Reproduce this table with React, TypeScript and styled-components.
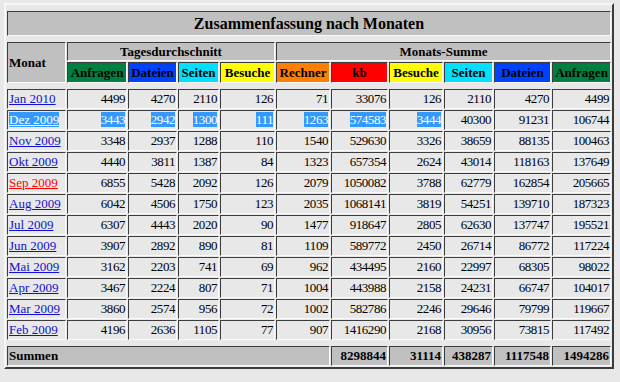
import { FunctionComponent } from "react";
import styled, { createGlobalStyle } from "styled-components";

const GlobalStyle = createGlobalStyle`
  html, body {
    margin: 0;
    padding: 0;
    background: #e8e8e8;
    font-family: "Liberation Serif", "Times New Roman", serif;
    color: #000;
  }
`;

const Page = styled.div`
  padding: 3px 0 0 4px;
`;

const Table = styled.table`
  table-layout: fixed;
  width: 610px;
  border-collapse: separate;
  border-spacing: 1px;
  border: 2px solid;
  border-color: #f6f6f6 #3c3c3c #3c3c3c #f6f6f6;
`;

const Col = styled.col<{ $w: number }>`
  width: ${(p) => p.$w}px;
`;

const Spacer = styled.td`
  height: 4px;
  padding: 0;
  border: 0;
`;

const Cell = styled.td<{ $align?: "left" | "right" | "center" }>`
  border: 1px solid;
  border-color: #3c3c3c #fafafa #fafafa #3c3c3c;
  padding: 1px;
  height: 16px;
  line-height: 16px;
  font-size: 13px;
  text-align: ${(p) => p.$align ?? "right"};
  white-space: nowrap;
  overflow: hidden;
`;

const Num = styled.span`
  letter-spacing: -0.45px;
`;

const Head = styled.th<{ $bg?: string; $align?: "left" | "right" | "center"; $h?: number }>`
  border: 1px solid;
  border-color: #3c3c3c #fafafa #fafafa #3c3c3c;
  padding: 1px;
  height: ${(p) => p.$h ?? 16}px;
  line-height: ${(p) => p.$h ?? 16}px;
  background: ${(p) => p.$bg ?? "#c0c0c0"};
  font-size: 13px;
  font-weight: bold;
  text-align: ${(p) => p.$align ?? "center"};
  white-space: nowrap;
  overflow: hidden;
`;

const Title = styled(Head)`
  font-size: 16px;
`;

const MonthLink = styled.a<{ $red?: boolean }>`
  color: ${(p) => (p.$red ? "#ff0000" : "#1010d0")};
  text-decoration: underline;
`;

const Selected = styled.span`
  background: #3399ff;
  color: #fff;
`;

const widths = [59, 60, 49, 41, 55, 54, 57, 54, 49, 57, 59];

type Row = { month: string; values: number[]; red?: boolean; sel?: number };

const rows: Row[] = [
  { month: "Jan 2010", values: [4499, 4270, 2110, 126, 71, 33076, 126, 2110, 4270, 4499] },
  { month: "Dez 2009", values: [3443, 2942, 1300, 111, 1263, 574583, 3444, 40300, 91231, 106744], sel: 7 },
  { month: "Nov 2009", values: [3348, 2937, 1288, 110, 1540, 529630, 3326, 38659, 88135, 100463] },
  { month: "Okt 2009", values: [4440, 3811, 1387, 84, 1323, 657354, 2624, 43014, 118163, 137649] },
  { month: "Sep 2009", values: [6855, 5428, 2092, 126, 2079, 1050082, 3788, 62779, 162854, 205665], red: true },
  { month: "Aug 2009", values: [6042, 4506, 1750, 123, 2035, 1068141, 3819, 54251, 139710, 187323] },
  { month: "Jul 2009", values: [6307, 4443, 2020, 90, 1477, 918647, 2805, 62630, 137747, 195521] },
  { month: "Jun 2009", values: [3907, 2892, 890, 81, 1109, 589772, 2450, 26714, 86772, 117224] },
  { month: "Mai 2009", values: [3162, 2203, 741, 69, 962, 434495, 2160, 22997, 68305, 98022] },
  { month: "Apr 2009", values: [3467, 2224, 807, 71, 1004, 443988, 2158, 24231, 66747, 104017] },
  { month: "Mar 2009", values: [3860, 2574, 956, 72, 1002, 582786, 2246, 29646, 79799, 119667] },
  { month: "Feb 2009", values: [4196, 2636, 1105, 77, 907, 1416290, 2168, 30956, 73815, 117492] },
];

const columns = [
  { label: "Anfragen", bg: "#008040" },
  { label: "Dateien", bg: "#0040ff" },
  { label: "Seiten", bg: "#00e0ff" },
  { label: "Besuche", bg: "#ffff00" },
  { label: "Rechner", bg: "#ff8000" },
  { label: "kb", bg: "#ff0000" },
  { label: "Besuche", bg: "#ffff00" },
  { label: "Seiten", bg: "#00e0ff" },
  { label: "Dateien", bg: "#0040ff" },
  { label: "Anfragen", bg: "#008040" },
];

const totals = [8298844, 31114, 438287, 1117548, 1494286];

const SpacerRow: FunctionComponent = () => (
  <tr>
    <Spacer colSpan={11} />
  </tr>
);

const App: FunctionComponent = () => (
  <>
    <GlobalStyle />
    <Page>
      <Table>
        <colgroup>
          {widths.map((w, i) => (
            <Col key={i} $w={w} />
          ))}
        </colgroup>
        <tbody>
          <SpacerRow />
          <tr>
            <Title colSpan={11} $h={21}>
              Zusammenfassung nach Monaten
            </Title>
          </tr>
          <SpacerRow />
          <tr>
            <Head rowSpan={2} $align="left">
              Monat
            </Head>
            <Head colSpan={4} $h={15}>
              Tagesdurchschnitt
            </Head>
            <Head colSpan={6} $h={15}>
              Monats-Summe
            </Head>
          </tr>
          <tr>
            {columns.map((c, i) => (
              <Head key={i} $bg={c.bg} $h={17}>
                {c.label}
              </Head>
            ))}
          </tr>
          <SpacerRow />
          {rows.map((r) => (
            <tr key={r.month}>
              <Cell $align="left">
                {r.sel ? (
                  <Selected>
                    <MonthLink href="#" style={{ color: "#fff" }}>
                      {r.month}
                    </MonthLink>
                  </Selected>
                ) : (
                  <MonthLink href="#" $red={r.red}>
                    {r.month}
                  </MonthLink>
                )}
              </Cell>
              {r.values.map((v, i) => (
                <Cell key={i}>
                  {r.sel && i < r.sel ? (
                    <Selected>
                      <Num>{v}</Num>
                    </Selected>
                  ) : (
                    <Num>{v}</Num>
                  )}
                </Cell>
              ))}
            </tr>
          ))}
          <SpacerRow />
          <tr>
            <Head colSpan={6} $align="left">
              Summen
            </Head>
            {totals.map((t, i) => (
              <Head key={i} $align="right">
                {t}
              </Head>
            ))}
          </tr>
        </tbody>
      </Table>
    </Page>
  </>
);

export default App;
